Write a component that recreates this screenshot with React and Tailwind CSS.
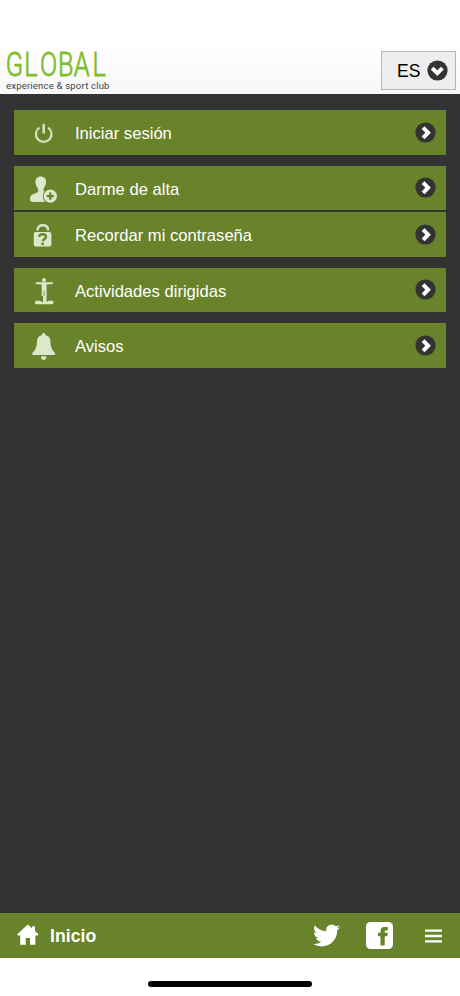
const PowerIcon = () => (
  <svg width="32" height="44" viewBox="0 0 32 44" fill="none" stroke="#d5e2bd" strokeWidth="2.3">
    <path d="M12.3 17.6A7.8 7.8 0 1 0 21.1 17.6" />
    <path d="M16.7 13.8V23.6" strokeWidth="2.5" />
  </svg>
);

const UserPlusIcon = () => (
  <svg width="32" height="44" viewBox="0 0 32 44" fill="#dde8ca">
    <path d="M13.7 10.4C10.4 10.4 8.3 12.6 8.4 16C8.5 19 9.9 20.7 10.8 22.4C11.6 23.9 11.5 25.6 10.2 26.4L5.4 28.6C3.2 29.8 3 31.8 3.1 34C3.2 35.3 4 35.8 6 35.9H18.2A7.8 7.8 0 0 1 17.4 25.6C16.4 24.8 16 23.7 16.7 22.4C17.6 20.7 19 19 19.1 16C19.2 12.6 17 10.4 13.7 10.4Z" />
    <circle cx="23.3" cy="30.2" r="6.6" />
    <path d="M23.3 26.6V33.8M19.7 30.2H26.9" stroke="#68832a" strokeWidth="2.2" />
  </svg>
);

const LockIcon = () => (
  <svg width="32" height="44" viewBox="0 0 32 44" fill="#dde8ca">
    <path d="M10.6 18.6V17.8C10.6 14.8 12.8 13.3 15.8 13.3S21 14.8 21 17.8V18.6" fill="none" stroke="#dde8ca" strokeWidth="2.4" />
    <rect x="6.8" y="20" width="17.6" height="14.6" rx="2" />
    <path d="M12.2 24.8C12.4 22.9 13.7 22.3 15.5 22.3C17.7 22.3 19 23.2 19 24.9C19 27 15.8 26.8 15.8 29.3" fill="none" stroke="#68832a" strokeWidth="2.4" />
    <path d="M14.4 30.7H17V33H14.4Z" fill="#68832a" />
  </svg>
);

const ActivityIcon = () => (
  <svg width="32" height="44" viewBox="0 0 32 44" fill="#dde8ca">
    <circle cx="17" cy="12" r="2" />
    <path d="M8.7 14.2H25.9V15.9L19.6 16.6V34H16V28H14.7V16.6L8.7 15.9Z" />
    <path d="M17.1 23V28" stroke="#68832a" strokeWidth="0.8" />
    <path d="M9.4 32.8H13.2L14.4 34H20L21.2 32.8H25C26.9 32.8 26.9 36.3 25 36.3H9.4C7.5 36.3 7.5 32.8 9.4 32.8Z" />
  </svg>
);

const BellIcon = () => (
  <svg width="32" height="44" viewBox="0 0 32 44" fill="#dde8ca">
    <path d="M16.7 10C15.6 10 15 10.8 15 12C11.5 12.8 10.1 15.3 10 18.5C9.9 23 9 26.5 5.6 29.8C4.6 31 5.2 32.1 6.6 32.1H26.8C28.2 32.1 28.8 31 27.8 29.8C24.4 26.5 23.5 23 23.4 18.5C23.3 15.3 21.9 12.8 18.4 12C18.4 10.8 17.8 10 16.7 10Z" />
    <path d="M14 33.2H19.4C19.2 36 18.2 37 16.7 37S14.2 36 14 33.2Z" />
  </svg>
);

const RoundChevron = ({ className = '' }) => (
  <svg className={className} width="21" height="21" viewBox="0 0 21 21">
    <circle cx="10.5" cy="10.5" r="10.1" fill="#333" />
    <path d="M8.1 5.6L13.1 10.7L8.1 15.8" fill="none" stroke="#fff" strokeWidth="4" />
  </svg>
);

const MenuRow = ({ icon: Icon, label }) => (
  <button className="flex h-[44.5px] w-full items-center bg-[#68832a] pl-[13px] pr-[10.5px] text-left text-[16.6px] text-white">
    <Icon />
    <span className="ml-4 mt-[5px] flex-1 whitespace-nowrap">{label}</span>
    <RoundChevron />
  </button>
);

const Logo = () => (
  <svg width="112" height="56" viewBox="0 0 112 56">
    <g fontFamily="Roboto, sans-serif">
      <text transform="scale(0.78 1)" x="7.5 31 51.2 74.4 94.6 118.6" y="37.8" fontSize="32.5" fontWeight="300" fill="#80bd2b" stroke="#80bd2b" strokeWidth="0.8">
        GLOBAL
      </text>
      <text x="6" y="50.9" fontSize="9.6" fill="#444" textLength="103.5">
        experience &amp; sport club
      </text>
    </g>
  </svg>
);

const App = () => {
  return (
    <div className="flex h-[996px] w-[460px] flex-col bg-white font-['Liberation_Sans',Arial,sans-serif]">
      <header className="flex h-[94px] shrink-0 items-end justify-between bg-linear-to-b from-white from-50% to-[#f7f7f7] pr-1">
        <Logo />
        <button className="mb-1 flex h-[39px] w-[75px] items-center border border-[#b5b5b5] bg-[#eee] pl-[15px] text-[17.5px] text-black">
          <span className="mt-0.5">ES</span>
          <RoundChevron className="ml-[7px] rotate-90" />
        </button>
      </header>

      <main className="flex flex-1 flex-col gap-[11px] bg-[#333] px-3.5 pt-4">
        <MenuRow icon={PowerIcon} label="Iniciar sesión" />
        <div className="flex flex-col gap-[2.2px]">
          <MenuRow icon={UserPlusIcon} label="Darme de alta" />
          <MenuRow icon={LockIcon} label="Recordar mi contraseña" />
        </div>
        <MenuRow icon={ActivityIcon} label="Actividades dirigidas" />
        <MenuRow icon={BellIcon} label="Avisos" />
      </main>

      <footer className="flex h-[45px] shrink-0 items-center bg-[#68832a] pl-[17px] pr-[18.5px] text-white">
        <svg className="-mt-0.5" width="22" height="22" viewBox="0 0 22 22" fill="currentColor">
          <path d="M10.8 0.5L15 4.3V2.2H18V7L21.5 10.3L20.8 11.5H18.4V20.7H13V14H8.7V20.7H3.2V11.5H1L0.2 10.3Z" />
        </svg>
        <span className="ml-[11px] mt-0.5 flex-1 text-[17.7px] font-bold">Inicio</span>
        <svg width="27" height="27" viewBox="0 0 24 24" fill="currentColor">
          <path d="M23.95 4.57a10 10 0 0 1-2.82.77 4.96 4.96 0 0 0 2.16-2.72c-.95.55-2 .95-3.13 1.18a4.92 4.92 0 0 0-8.38 4.48C7.69 8.1 4.07 6.13 1.64 3.16a4.82 4.82 0 0 0-.67 2.48c0 1.71.87 3.21 2.19 4.1a4.9 4.9 0 0 1-2.23-.62v.06a4.92 4.92 0 0 0 3.95 4.83 5 5 0 0 1-2.21.08 4.94 4.94 0 0 0 4.6 3.42A9.87 9.87 0 0 1 0 19.54a14 14 0 0 0 7.55 2.21c9.05 0 14-7.5 14-13.98 0-.21 0-.42-.02-.63a9.94 9.94 0 0 0 2.42-2.57z" />
        </svg>
        <svg className="ml-[26px]" width="27" height="27" viewBox="0 0 27 27">
          <rect width="27" height="27" rx="4.5" fill="currentColor" />
          <path d="M14.5 23.5V14.3H12V10.8H14.5V9C14.5 6.2 16 5 18.5 5H21.8V8.6H20C19 8.6 18.7 9.1 18.7 10V10.8H21.8L21.4 14.3H18.7V23.5Z" fill="#68832a" />
        </svg>
        <svg className="ml-8 mt-px" width="16.5" height="14" viewBox="0 0 16.5 14" stroke="currentColor" strokeWidth="2.3">
          <path d="M0 1.7H17M0 7H17M0 12.3H17" />
        </svg>
      </footer>

      <div className="flex h-[38px] shrink-0 items-end justify-center pb-[9px]">
        <div className="h-[6px] w-[164px] rounded-full bg-black" />
      </div>
    </div>
  );
};

export default App;
